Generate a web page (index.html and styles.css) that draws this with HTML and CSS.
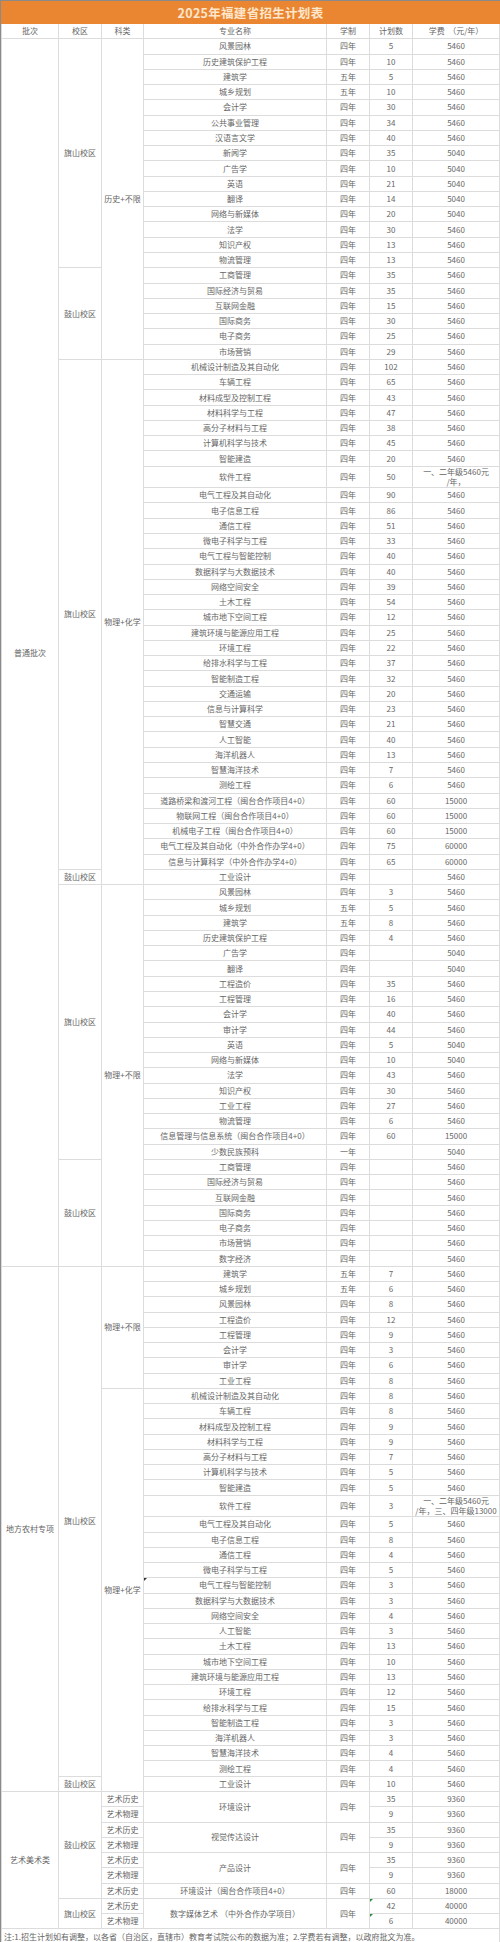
FILE: index.html
```html
<!DOCTYPE html>
<html lang="zh-CN">
<head>
<meta charset="utf-8">
<title>2025年福建省招生计划表</title>
<link rel="stylesheet" href="styles.css">
</head>
<body>
<div class="sheet">
<table class="plan">
<colgroup>
<col class="w-batch"><col class="w-campus"><col class="w-cat"><col class="w-major"><col class="w-len"><col class="w-num"><col class="w-fee">
</colgroup>
<thead>
<tr class="title"><th colspan="7">2025年福建省招生计划表</th></tr>
<tr class="head"><th>批次</th><th>校区</th><th>科类</th><th>专业名称</th><th>学制</th><th>计划数</th><th>学费&nbsp;&nbsp;（元/年）</th></tr>
</thead>
<tbody>
<tr><td rowspan="80">普通批次</td><td rowspan="15">旗山校区</td><td rowspan="21">历史+不限</td><td>风景园林</td><td>四年</td><td>5</td><td>5460</td></tr>
<tr><td>历史建筑保护工程</td><td>四年</td><td>10</td><td>5460</td></tr>
<tr><td>建筑学</td><td>五年</td><td>5</td><td>5460</td></tr>
<tr><td>城乡规划</td><td>五年</td><td>10</td><td>5460</td></tr>
<tr><td>会计学</td><td>四年</td><td>30</td><td>5460</td></tr>
<tr><td>公共事业管理</td><td>四年</td><td>34</td><td>5460</td></tr>
<tr><td>汉语言文学</td><td>四年</td><td>40</td><td>5460</td></tr>
<tr><td>新闻学</td><td>四年</td><td>35</td><td>5040</td></tr>
<tr><td>广告学</td><td>四年</td><td>10</td><td>5040</td></tr>
<tr><td>英语</td><td>四年</td><td>21</td><td>5040</td></tr>
<tr><td>翻译</td><td>四年</td><td>14</td><td>5040</td></tr>
<tr><td>网络与新媒体</td><td>四年</td><td>20</td><td>5040</td></tr>
<tr><td>法学</td><td>四年</td><td>30</td><td>5460</td></tr>
<tr><td>知识产权</td><td>四年</td><td>13</td><td>5460</td></tr>
<tr><td>物流管理</td><td>四年</td><td>13</td><td>5460</td></tr>
<tr><td rowspan="6">鼓山校区</td><td>工商管理</td><td>四年</td><td>35</td><td>5460</td></tr>
<tr><td>国际经济与贸易</td><td>四年</td><td>35</td><td>5460</td></tr>
<tr><td>互联网金融</td><td>四年</td><td>15</td><td>5460</td></tr>
<tr><td>国际商务</td><td>四年</td><td>30</td><td>5460</td></tr>
<tr><td>电子商务</td><td>四年</td><td>25</td><td>5460</td></tr>
<tr><td>市场营销</td><td>四年</td><td>29</td><td>5460</td></tr>
<tr><td rowspan="33">旗山校区</td><td rowspan="34">物理+化学</td><td>机械设计制造及其自动化</td><td>四年</td><td>102</td><td>5460</td></tr>
<tr><td>车辆工程</td><td>四年</td><td>65</td><td>5460</td></tr>
<tr><td>材料成型及控制工程</td><td>四年</td><td>43</td><td>5460</td></tr>
<tr><td>材料科学与工程</td><td>四年</td><td>47</td><td>5460</td></tr>
<tr><td>高分子材料与工程</td><td>四年</td><td>38</td><td>5460</td></tr>
<tr><td>计算机科学与技术</td><td>四年</td><td>45</td><td>5460</td></tr>
<tr><td>智能建造</td><td>四年</td><td>20</td><td>5460</td></tr>
<tr class="tall"><td>软件工程</td><td>四年</td><td>50</td><td class="fee-top"><div class="clip">一、二年级5460元<br>/年，<br>三、四年级13000元/年</div></td></tr>
<tr><td>电气工程及其自动化</td><td>四年</td><td>90</td><td>5460</td></tr>
<tr><td>电子信息工程</td><td>四年</td><td>86</td><td>5460</td></tr>
<tr><td>通信工程</td><td>四年</td><td>51</td><td>5460</td></tr>
<tr><td>微电子科学与工程</td><td>四年</td><td>33</td><td>5460</td></tr>
<tr><td>电气工程与智能控制</td><td>四年</td><td>40</td><td>5460</td></tr>
<tr><td>数据科学与大数据技术</td><td>四年</td><td>40</td><td>5460</td></tr>
<tr><td>网络空间安全</td><td>四年</td><td>39</td><td>5460</td></tr>
<tr><td>土木工程</td><td>四年</td><td>54</td><td>5460</td></tr>
<tr><td>城市地下空间工程</td><td>四年</td><td>12</td><td>5460</td></tr>
<tr><td>建筑环境与能源应用工程</td><td>四年</td><td>25</td><td>5460</td></tr>
<tr><td>环境工程</td><td>四年</td><td>22</td><td>5460</td></tr>
<tr><td>给排水科学与工程</td><td>四年</td><td>37</td><td>5460</td></tr>
<tr><td>智能制造工程</td><td>四年</td><td>32</td><td>5460</td></tr>
<tr><td>交通运输</td><td>四年</td><td>20</td><td>5460</td></tr>
<tr><td>信息与计算科学</td><td>四年</td><td>23</td><td>5460</td></tr>
<tr><td>智慧交通</td><td>四年</td><td>21</td><td>5460</td></tr>
<tr><td>人工智能</td><td>四年</td><td>40</td><td>5460</td></tr>
<tr><td>海洋机器人</td><td>四年</td><td>13</td><td>5460</td></tr>
<tr><td>智慧海洋技术</td><td>四年</td><td>7</td><td>5460</td></tr>
<tr><td>测绘工程</td><td>四年</td><td>6</td><td>5460</td></tr>
<tr><td>道路桥梁和渡河工程（闽台合作项目4+0）</td><td>四年</td><td>60</td><td>15000</td></tr>
<tr><td>物联网工程（闽台合作项目4+0）</td><td>四年</td><td>60</td><td>15000</td></tr>
<tr><td>机械电子工程（闽台合作项目4+0）</td><td>四年</td><td>60</td><td>15000</td></tr>
<tr><td>电气工程及其自动化（中外合作办学4+0）</td><td>四年</td><td>75</td><td>60000</td></tr>
<tr><td>信息与计算科学（中外合作办学4+0）</td><td>四年</td><td>65</td><td>60000</td></tr>
<tr><td>鼓山校区</td><td>工业设计</td><td>四年</td><td></td><td>5460</td></tr>
<tr><td rowspan="18">旗山校区</td><td rowspan="25">物理+不限</td><td>风景园林</td><td>四年</td><td>3</td><td>5460</td></tr>
<tr><td>城乡规划</td><td>五年</td><td>5</td><td>5460</td></tr>
<tr><td>建筑学</td><td>五年</td><td>8</td><td>5460</td></tr>
<tr><td>历史建筑保护工程</td><td>四年</td><td>4</td><td>5460</td></tr>
<tr><td>广告学</td><td>四年</td><td></td><td>5040</td></tr>
<tr><td>翻译</td><td>四年</td><td></td><td>5040</td></tr>
<tr><td>工程造价</td><td>四年</td><td>35</td><td>5460</td></tr>
<tr><td>工程管理</td><td>四年</td><td>16</td><td>5460</td></tr>
<tr><td>会计学</td><td>四年</td><td>40</td><td>5460</td></tr>
<tr><td>审计学</td><td>四年</td><td>44</td><td>5460</td></tr>
<tr><td>英语</td><td>四年</td><td>5</td><td>5040</td></tr>
<tr><td>网络与新媒体</td><td>四年</td><td>10</td><td>5040</td></tr>
<tr><td>法学</td><td>四年</td><td>43</td><td>5460</td></tr>
<tr><td>知识产权</td><td>四年</td><td>30</td><td>5460</td></tr>
<tr><td>工业工程</td><td>四年</td><td>27</td><td>5460</td></tr>
<tr><td>物流管理</td><td>四年</td><td>6</td><td>5460</td></tr>
<tr><td>信息管理与信息系统（闽台合作项目4+0）</td><td>四年</td><td>60</td><td>15000</td></tr>
<tr><td>少数民族预科</td><td>一年</td><td></td><td>5040</td></tr>
<tr><td rowspan="7">鼓山校区</td><td>工商管理</td><td>四年</td><td></td><td>5460</td></tr>
<tr><td>国际经济与贸易</td><td>四年</td><td></td><td>5460</td></tr>
<tr><td>互联网金融</td><td>四年</td><td></td><td>5460</td></tr>
<tr><td>国际商务</td><td>四年</td><td></td><td>5460</td></tr>
<tr><td>电子商务</td><td>四年</td><td></td><td>5460</td></tr>
<tr><td>市场营销</td><td>四年</td><td></td><td>5460</td></tr>
<tr><td>数字经济</td><td>四年</td><td></td><td>5460</td></tr>
<tr><td rowspan="34">地方农村专项</td><td rowspan="33">旗山校区</td><td rowspan="8">物理+不限</td><td>建筑学</td><td>五年</td><td>7</td><td>5460</td></tr>
<tr><td>城乡规划</td><td>五年</td><td>6</td><td>5460</td></tr>
<tr><td>风景园林</td><td>四年</td><td>8</td><td>5460</td></tr>
<tr><td>工程造价</td><td>四年</td><td>12</td><td>5460</td></tr>
<tr><td>工程管理</td><td>四年</td><td>9</td><td>5460</td></tr>
<tr><td>会计学</td><td>四年</td><td>3</td><td>5460</td></tr>
<tr><td>审计学</td><td>四年</td><td>6</td><td>5460</td></tr>
<tr><td>工业工程</td><td>四年</td><td>8</td><td>5460</td></tr>
<tr><td rowspan="26">物理+化学</td><td>机械设计制造及其自动化</td><td>四年</td><td>8</td><td>5460</td></tr>
<tr><td>车辆工程</td><td>四年</td><td>8</td><td>5460</td></tr>
<tr><td>材料成型及控制工程</td><td>四年</td><td>9</td><td>5460</td></tr>
<tr><td>材料科学与工程</td><td>四年</td><td>9</td><td>5460</td></tr>
<tr><td>高分子材料与工程</td><td>四年</td><td>7</td><td>5460</td></tr>
<tr><td>计算机科学与技术</td><td>四年</td><td>5</td><td>5460</td></tr>
<tr><td>智能建造</td><td>四年</td><td>5</td><td>5460</td></tr>
<tr class="tall"><td>软件工程</td><td>四年</td><td>3</td><td class="fee2">一、二年级5460元<br>/年，三、四年级13000</td></tr>
<tr><td>电气工程及其自动化</td><td>四年</td><td>5</td><td>5460</td></tr>
<tr><td>电子信息工程</td><td>四年</td><td>8</td><td>5460</td></tr>
<tr><td>通信工程</td><td>四年</td><td>4</td><td>5460</td></tr>
<tr><td>微电子科学与工程</td><td>四年</td><td>5</td><td>5460</td></tr>
<tr><td class="mark dark">电气工程与智能控制</td><td>四年</td><td>3</td><td>5460</td></tr>
<tr><td>数据科学与大数据技术</td><td>四年</td><td>3</td><td>5460</td></tr>
<tr><td>网络空间安全</td><td>四年</td><td>4</td><td>5460</td></tr>
<tr><td>人工智能</td><td>四年</td><td>3</td><td>5460</td></tr>
<tr><td>土木工程</td><td>四年</td><td>13</td><td>5460</td></tr>
<tr><td>城市地下空间工程</td><td>四年</td><td>10</td><td>5460</td></tr>
<tr><td>建筑环境与能源应用工程</td><td>四年</td><td>13</td><td>5460</td></tr>
<tr><td>环境工程</td><td>四年</td><td>12</td><td>5460</td></tr>
<tr><td>给排水科学与工程</td><td>四年</td><td>15</td><td>5460</td></tr>
<tr><td>智能制造工程</td><td>四年</td><td>3</td><td>5460</td></tr>
<tr><td>海洋机器人</td><td>四年</td><td>3</td><td>5460</td></tr>
<tr><td>智慧海洋技术</td><td>四年</td><td>4</td><td>5460</td></tr>
<tr><td>测绘工程</td><td>四年</td><td>4</td><td>5460</td></tr>
<tr><td>鼓山校区</td><td>工业设计</td><td>四年</td><td>10</td><td>5460</td></tr>
<tr><td rowspan="9">艺术美术类</td><td rowspan="7">鼓山校区</td><td>艺术历史</td><td rowspan="2">环境设计</td><td rowspan="2">四年</td><td>35</td><td>9360</td></tr>
<tr><td>艺术物理</td><td>9</td><td>9360</td></tr>
<tr><td>艺术历史</td><td rowspan="2">视觉传达设计</td><td rowspan="2">四年</td><td>35</td><td>9360</td></tr>
<tr><td>艺术物理</td><td>9</td><td>9360</td></tr>
<tr><td>艺术历史</td><td rowspan="2">产品设计</td><td rowspan="2">四年</td><td>35</td><td>9360</td></tr>
<tr><td>艺术物理</td><td>9</td><td>9360</td></tr>
<tr><td>艺术历史</td><td>环境设计（闽台合作项目4+0）</td><td>四年</td><td>60</td><td>18000</td></tr>
<tr><td rowspan="2">旗山校区</td><td>艺术历史</td><td rowspan="2">数字媒体艺术 （中外合作办学项目）</td><td rowspan="2">四年</td><td class="mark">42</td><td>40000</td></tr>
<tr><td>艺术物理</td><td class="mark">6</td><td>40000</td></tr>
<tr><td colspan="7" class="note">注:1.招生计划如有调整，以各省（自治区，直辖市）教育考试院公布的数据为准；2.学费若有调整，以政府批文为准。</td></tr>
</tbody>
</table>
</div>
</body>
</html>
```

FILE: styles.css
```css
html, body {
  margin: 0;
  padding: 0;
  background: #ffffff;
}

body {
  font-family: "Noto Sans CJK SC", "Noto Sans", "Liberation Sans", sans-serif;
}

.sheet {
  width: 500px;
  border-left: 1px solid #8a8a8a;
  border-right: 1px solid #8a8a8a;
  border-top: 1px solid #8a8a8a;
  box-sizing: border-box;
}

.plan {
  width: 498px;
  border-collapse: collapse;
  table-layout: fixed;
  color: #666666;
  font-size: 8px;
}

.w-batch { width: 57px; }
.w-campus { width: 43px; }
.w-cat { width: 42px; }
.w-major { width: 183px; }
.w-len { width: 43px; }
.w-num { width: 43px; }
.w-fee { width: 87px; }

.plan th,
.plan td {
  border: 1px solid #dcdcdc;
  padding: 0;
  text-align: center;
  vertical-align: middle;
  line-height: 10px;
  white-space: nowrap;
  overflow: hidden;
  font-weight: normal;
}

.plan tr {
  height: 15.27px;
}

.plan tr.title {
  height: 22px;
}

.title th {
  background: #ea8632;
  border-color: #ea8632;
  color: #fde6cc;
  font-size: 12.5px;
  font-weight: bold;
  letter-spacing: 0.3px;
}

.head th {
  color: #666666;
}

.plan tr.tall {
  height: 21.5px;
}

.fee-top {
  vertical-align: top;
}

.clip {
  height: 20px;
  overflow: hidden;
  line-height: 10px;
  padding-top: 0.5px;
}

.fee2 {
  line-height: 9.5px;
}

.mark {
  position: relative;
}

.mark::before {
  content: "";
  position: absolute;
  left: 0;
  top: 0;
  border-top: 3px solid #2e8b3a;
  border-right: 3px solid transparent;
}

.mark.dark::before {
  border-top-color: #333333;
}

.note {
  text-align: left !important;
  padding-left: 2px !important;
  height: 14px;
}
```
